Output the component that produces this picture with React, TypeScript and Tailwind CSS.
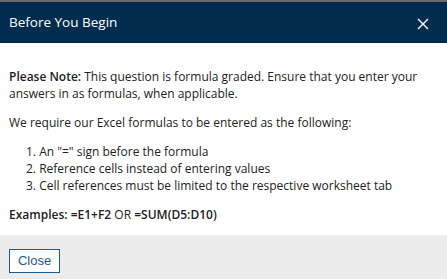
export default function App() {
  return (
    <div className="w-[447px] h-[279px] overflow-hidden bg-white font-['Open_Sans',sans-serif]">
      <div className="h-[2px] bg-[#6b6b6b]" />
      <div className="h-[41px] bg-[#002d4f] flex items-center justify-between pl-[9px] pr-[18px]">
        <h1 className="text-[13.5px] text-white leading-none mt-[1px]">Before You Begin</h1>
        <svg width="12" height="12" viewBox="0 0 12 12" className="mt-[2px]">
          <path d="M1 1 L11 11 M11 1 L1 11" stroke="#ffffff" strokeWidth="1.4" />
        </svg>
      </div>
      <div className="px-[9px] pt-[25px] pb-[12px] text-[12px] leading-[17px] text-[#222]">
        <p>
          <span className="font-semibold">Please Note:</span> This question is formula graded. Ensure that you enter your answers in as formulas, when applicable.
        </p>
        <p className="mt-[12px]">We require our Excel formulas to be entered as the following:</p>
        <ol className="mt-[12px] pl-[17px]">
          <li>1. An "=" sign before the formula</li>
          <li>2. Reference cells instead of entering values</li>
          <li>3. Cell references must be limited to the respective worksheet tab</li>
        </ol>
        <p className="mt-[12px]">
          <span className="font-semibold">Examples: =E1+F2</span> OR <span className="font-semibold">=SUM(D5:D10)</span>
        </p>
      </div>
      <div className="bg-[#ececec] h-[44px] px-[9px] pt-[12px]">
        <button className="h-[24px] w-[51px] border border-[#1d5a8c] bg-white text-[#1d5a8c] text-[13px] font-['Liberation_Sans',Arial,sans-serif]">
          Close
        </button>
      </div>
    </div>
  );
}
